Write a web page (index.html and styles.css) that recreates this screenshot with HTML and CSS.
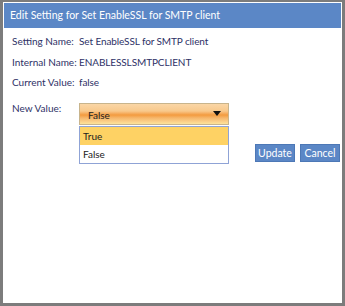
FILE: index.html
```html
<!DOCTYPE html>
<html lang="en">
<head>
    <meta charset="UTF-8">
    <title>Edit Setting</title>
    <link rel="stylesheet" href="styles.css">
</head>
<body>
    <div class="dialog">
        <div class="dialog-title">Edit Setting for Set EnableSSL for SMTP client</div>
        <div class="dialog-body">
            <div class="field">
                <span class="label">Setting Name:</span>
                <span class="value">Set EnableSSL for SMTP client</span>
            </div>
            <div class="field">
                <span class="label">Internal Name:</span>
                <span class="value">ENABLESSLSMTPCLIENT</span>
            </div>
            <div class="field">
                <span class="label">Current Value:</span>
                <span class="value">false</span>
            </div>

            <!-- New value picker (open) -->
            <div class="field edit">
                <span class="label">New Value:</span>
                <div class="combo">
                    <div class="combo-box">
                        <span>False</span>
                        <span class="arrow"></span>
                    </div>
                    <ul class="combo-list">
                        <li class="hover">True</li>
                        <li>False</li>
                    </ul>
                </div>
            </div>

            <div class="actions">
                <button class="btn">Update</button>
                <button class="btn">Cancel</button>
            </div>
        </div>
    </div>
</body>
</html>
```

FILE: styles.css
```css
html, body {
    height: 100%;
}
body {
    margin: 0;
    background: #7c7c7c;
    font-family: 'Lato', Arial, sans-serif;
    font-size: 10px;
    color: #2e3166;
    box-sizing: border-box;
    padding: 2px 3px 3px 3px;
}
.dialog {
    height: 100%;
    box-sizing: border-box;
    background: #fff;
    padding: 1px;
}
.dialog-title {
    height: 25px;
    line-height: 24px;
    background: #5b87c6;
    color: #fff;
    padding-left: 6px;
    font-size: 10.5px;
    white-space: nowrap;
}
.dialog-body {
    padding: 3px 1px 0 8px;
}
.field {
    display: flex;
    height: 20px;
    line-height: 20px;
    margin-bottom: 0.5px;
    white-space: nowrap;
}
.label {
    width: 67px;
    flex-shrink: 0;
}
.value {
    letter-spacing: -0.1px;
}
.field.edit {
    margin-top: 11px;
    height: 22px;
    line-height: 18px;
}
.field.edit .label {
    line-height: 11px;
}
.combo {
    position: relative;
    width: 150px;
}
.combo-box {
    height: 22px;
    box-sizing: border-box;
    border: 1px solid #c8b48c;
    background: linear-gradient(#fad6a6 0%, #f8c98c 35%, #f6b267 45%, #f39b3f 55%, #f6b76c 70%, #fbd08a 88%, #fde39a 100%);
    color: #222;
    display: flex;
    align-items: center;
    justify-content: space-between;
    padding: 2px 7px 0 8px;
}
.arrow {
    width: 0;
    height: 0;
    border-left: 4px solid transparent;
    border-right: 4px solid transparent;
    border-top: 5px solid #111;
    margin-top: -4px;
}
.combo-list {
    position: absolute;
    left: 0;
    top: 23px;
    width: 150px;
    box-sizing: border-box;
    margin: 0;
    padding: 0;
    list-style: none;
    background: #fff;
    border: 1px solid #8fa3d6;
    color: #222;
    z-index: 2;
}
.combo-list li {
    height: 18px;
    line-height: 18px;
    padding-left: 3px;
}
.combo-list li.hover {
    background: #fed264;
}
.actions {
    display: flex;
    justify-content: flex-end;
    gap: 5px;
    margin-top: 19px;
}
.btn {
    font-family: inherit;
    font-size: 10.5px;
    color: #fff;
    background: #5b87c6;
    border: 1px solid #4d78b6;
    height: 18px;
    width: 40px;
    padding: 0;
    line-height: 16px;
}
```
